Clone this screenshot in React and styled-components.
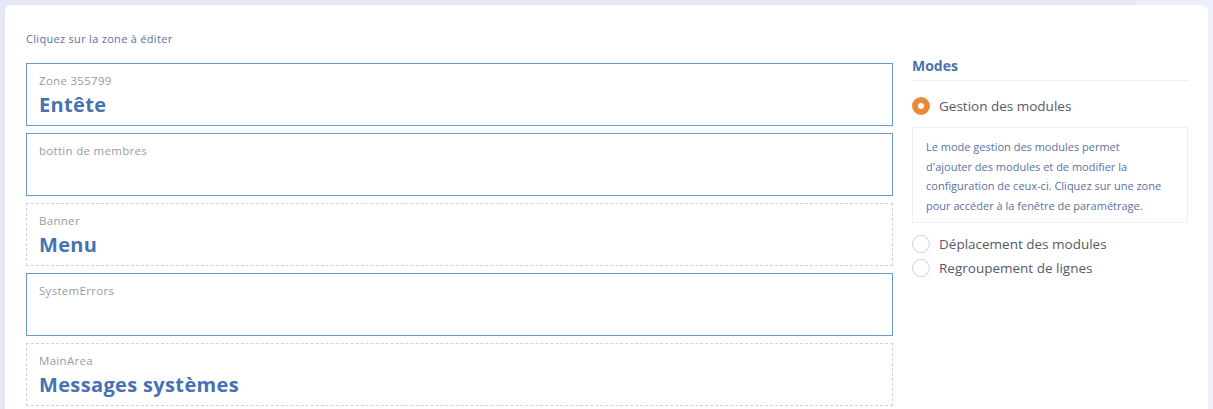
import React from 'react'
import styled, { createGlobalStyle } from 'styled-components'

const GlobalStyle = createGlobalStyle`
  html, body {
    margin: 0;
    padding: 0;
  }
  body {
    font-family: 'Open Sans', Lato, sans-serif;
    background: linear-gradient(113deg, #e3e7f6 0%, #e3e7f6 82%, #edeffa 82.1%, #edeffa 100%);
    height: 409px;
    overflow: hidden;
  }
`

const Card = styled.div`
  margin: 5px 5px 0 5px;
  background: #fff;
  border-radius: 6px 6px 0 0;
  padding: 27px 20px 0 21px;
  display: flex;
  gap: 19px;
  height: 420px;
  box-sizing: border-box;
`

const Editor = styled.div`
  flex: 1;
  display: flex;
  flex-direction: column;
`

const Hint = styled.div`
  font-size: 11px;
  line-height: 14px;
  letter-spacing: 0.3px;
  color: #5b72a6;
  margin-bottom: 17px;
`

const Zones = styled.div`
  display: flex;
  flex-direction: column;
  gap: 7px;
`

const Zone = styled.div`
  height: 63px;
  box-sizing: border-box;
  border: 1px ${p => (p.$dashed ? 'dashed #cdd3e4' : 'solid #7097c9')};
  padding: 9px 12px 0;
`

const ZoneLabel = styled.div`
  font-size: 11.5px;
  line-height: 16px;
  letter-spacing: 0.3px;
  color: #9a9aa6;
`

const ZoneTitle = styled.div`
  margin-top: 3px;
  font-size: 20px;
  line-height: 26px;
  font-weight: 700;
  letter-spacing: 0.35px;
  color: #4671b2;
`

const Side = styled.aside`
  width: 276px;
  padding-top: 25px;
`

const SideTitle = styled.div`
  font-size: 14px;
  line-height: 18px;
  font-weight: 700;
  color: #4a72b0;
  padding-bottom: 5px;
  border-bottom: 1px solid #eceff8;
`

const Option = styled.label`
  display: flex;
  align-items: center;
  gap: 9px;
  height: 24px;
  font-size: 13.5px;
  color: #555a66;
  margin-top: ${p => p.$top || 0}px;
`

const Radio = styled.span`
  width: 18px;
  height: 18px;
  box-sizing: border-box;
  border-radius: 50%;
  flex-shrink: 0;
  border: ${p => (p.$checked ? '6px solid #e98a3a' : '1.5px solid #cbd2e2')};
  background: #fff;
`

const Help = styled.div`
  margin: 9px 0 9px;
  border: 1px solid #edf0f8;
  padding: 9px 4px 7px 13px;
  font-size: 11px;
  line-height: 19.5px;
  color: #5d70a6;
`

const HelpLine = styled.span`
  display: block;
  white-space: nowrap;
`

const zones = [
  { label: 'Zone 355799', title: 'Entête' },
  { label: 'bottin de membres' },
  { label: 'Banner', title: 'Menu', dashed: true },
  { label: 'SystemErrors' },
  { label: 'MainArea', title: 'Messages systèmes', dashed: true },
]

const helpLines = [
  'Le mode gestion des modules permet',
  "d'ajouter des modules et de modifier la",
  'configuration de ceux-ci. Cliquez sur une zone',
  'pour accéder à la fenêtre de paramétrage.',
]

const App = () => (
  <>
    <GlobalStyle />
    <Card>
      <Editor>
        <Hint>Cliquez sur la zone à éditer</Hint>
        <Zones>
          {zones.map(z => (
            <Zone key={z.label} $dashed={z.dashed}>
              <ZoneLabel>{z.label}</ZoneLabel>
              {z.title && <ZoneTitle>{z.title}</ZoneTitle>}
            </Zone>
          ))}
        </Zones>
      </Editor>
      <Side>
        <SideTitle>Modes</SideTitle>
        <Option $top={13}>
          <Radio $checked />
          Gestion des modules
        </Option>
        <Help>
          {helpLines.map(l => (
            <HelpLine key={l}>{l}</HelpLine>
          ))}
        </Help>
        <Option>
          <Radio />
          Déplacement des modules
        </Option>
        <Option>
          <Radio />
          Regroupement de lignes
        </Option>
      </Side>
    </Card>
  </>
)

export default App
